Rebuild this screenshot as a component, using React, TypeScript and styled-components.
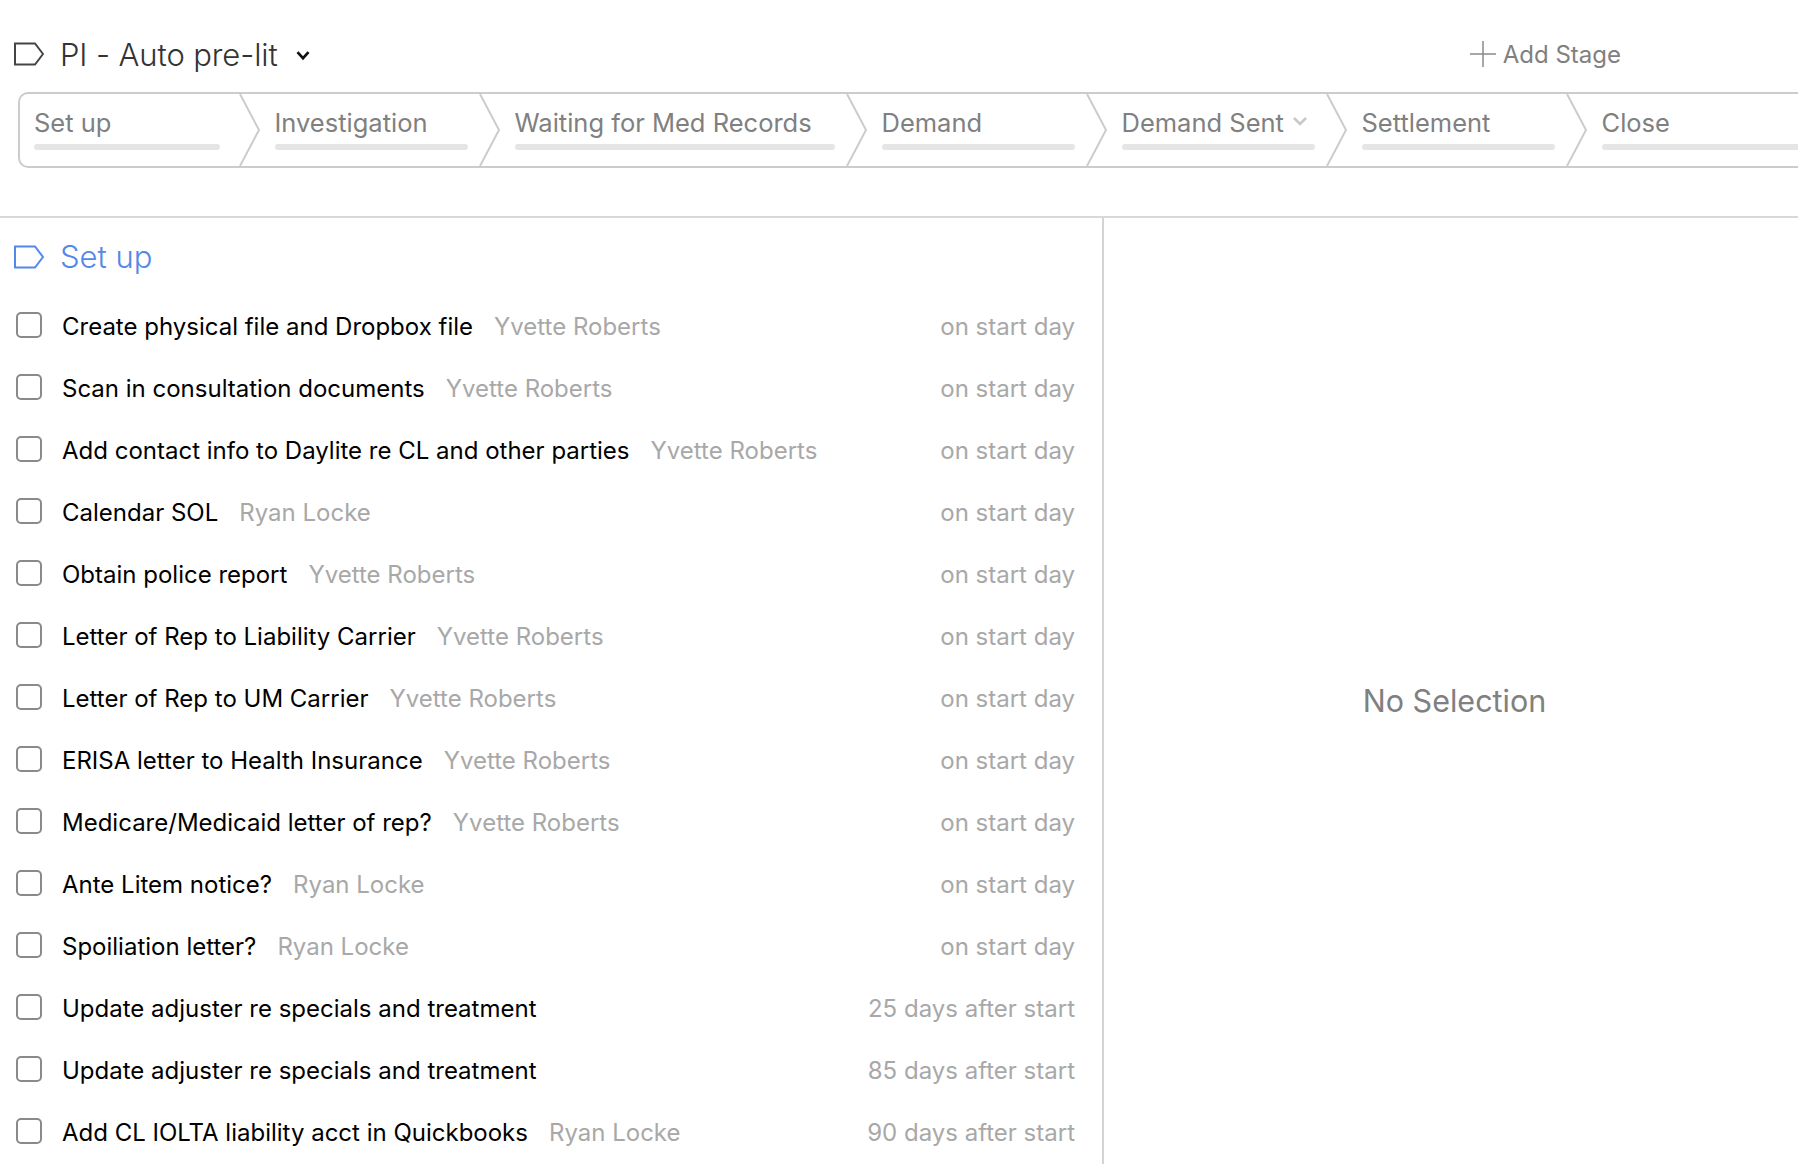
import styled, { createGlobalStyle } from "styled-components";

const stages = [
	{ name: "Set up", width: 220, first: true },
	{ name: "Investigation", width: 240 },
	{ name: "Waiting for Med Records", width: 367 },
	{ name: "Demand", width: 240 },
	{ name: "Demand Sent", width: 240, menu: true },
	{ name: "Settlement", width: 240 },
	{ name: "Close", width: 300, last: true },
];

const tasks = [
	{ title: "Create physical file and Dropbox file", who: "Yvette Roberts", when: "on start day" },
	{ title: "Scan in consultation documents", who: "Yvette Roberts", when: "on start day" },
	{ title: "Add contact info to Daylite re CL and other parties", who: "Yvette Roberts", when: "on start day" },
	{ title: "Calendar SOL", who: "Ryan Locke", when: "on start day" },
	{ title: "Obtain police report", who: "Yvette Roberts", when: "on start day" },
	{ title: "Letter of Rep to Liability Carrier", who: "Yvette Roberts", when: "on start day" },
	{ title: "Letter of Rep to UM Carrier", who: "Yvette Roberts", when: "on start day" },
	{ title: "ERISA letter to Health Insurance", who: "Yvette Roberts", when: "on start day" },
	{ title: "Medicare/Medicaid letter of rep?", who: "Yvette Roberts", when: "on start day" },
	{ title: "Ante Litem notice?", who: "Ryan Locke", when: "on start day" },
	{ title: "Spoiliation letter?", who: "Ryan Locke", when: "on start day" },
	{ title: "Update adjuster re specials and treatment", when: "25 days after start" },
	{ title: "Update adjuster re specials and treatment", when: "85 days after start" },
	{ title: "Add CL IOLTA liability acct in Quickbooks", who: "Ryan Locke", when: "90 days after start" },
];

function TagIcon({ color }: { color: string }) {
	return (
		<TagSvg viewBox="0 0 30 24">
			<path d="M1 1.5H21L29 12L21 22.5H1Z" fill="none" stroke={color} strokeWidth="2" />
		</TagSvg>
	);
}

function App() {
	return (
		<Page>
			<GlobalStyle />
			<Header>
				<TitleGroup>
					<TagIcon color="#444444" />
					<Title>PI - Auto pre-lit</Title>
					<TitleCaret viewBox="0 0 14 10">
						<path d="M2 2L7 7.5L12 2" fill="none" stroke="#111" strokeWidth="2.4" />
					</TitleCaret>
				</TitleGroup>
				<AddStage>
					<PlusSvg viewBox="0 0 26 26">
						<path d="M13 0V26M0 13H26" stroke="#8a8a8a" strokeWidth="1.5" />
					</PlusSvg>
					Add Stage
				</AddStage>
			</Header>
			<Strip>
				{stages.map((s) => (
					<Stage key={s.name} $width={s.width} $first={s.first}>
						<StageLabel>
							{s.name}
							{s.menu && (
								<MenuCaret viewBox="0 0 16 10">
									<path d="M2 2L8 8L14 2" fill="none" stroke="#c8c8c8" strokeWidth="2.6" />
								</MenuCaret>
							)}
						</StageLabel>
						<StageBar />
						{!s.last && (
							<Chevron viewBox="0 0 21 74" preserveAspectRatio="none">
								<path d="M1 0L20 37L1 74" fill="none" stroke="#cccccc" strokeWidth="2" />
							</Chevron>
						)}
					</Stage>
				))}
			</Strip>
			<Body>
				<ListPane>
					<SectionHead>
						<TagIcon color="#5288ea" />
						<SectionTitle>Set up</SectionTitle>
					</SectionHead>
					{tasks.map((t, i) => (
						<Row key={i}>
							<Check />
							<TaskTitle>{t.title}</TaskTitle>
							{t.who && <Who>{t.who}</Who>}
							<When>{t.when}</When>
						</Row>
					))}
				</ListPane>
				<DetailPane>No Selection</DetailPane>
			</Body>
		</Page>
	);
}
export default App;

const GlobalStyle = createGlobalStyle`
	html, body {
		margin: 0;
		padding: 0;
		background: #fff;
		overflow: hidden;
	}
	* {
		box-sizing: border-box;
	}
`;
const Page = styled.div`
	width: 1798px;
	height: 1164px;
	overflow: hidden;
	background: #fff;
	font-family: Inter, "Liberation Sans", sans-serif;
	display: flex;
	flex-direction: column;
`;
const Header = styled.div`
	height: 92px;
	flex: none;
	padding: 16px 177px 0 14px;
	display: flex;
	align-items: center;
	justify-content: space-between;
`;
const TitleGroup = styled.div`
	display: flex;
	align-items: center;
`;
const TagSvg = styled.svg`
	width: 30px;
	height: 24px;
	flex: none;
`;
const Title = styled.span`
	margin-left: 16px;
	font-size: 31px;
	font-weight: 300;
	letter-spacing: -0.1px;
	color: #333333;
`;
const TitleCaret = styled.svg`
	width: 16px;
	height: 11px;
	margin: 2px 0 0 17px;
`;
const AddStage = styled.div`
	display: flex;
	align-items: center;
	gap: 7px;
	font-size: 24px;
	color: #808080;
`;
const PlusSvg = styled.svg`
	width: 26px;
	height: 26px;
`;
const Strip = styled.div`
	margin-left: 18px;
	height: 76px;
	width: 1800px;
	flex: none;
	display: flex;
	border: 2px solid #cccccc;
	border-right: none;
	border-radius: 10px 0 0 10px;
`;
const Stage = styled.div<{ $width: number; $first?: boolean }>`
	position: relative;
	flex: none;
	width: ${(p) => p.$width}px;
	padding: 11px ${(p) => (p.$first ? 20 : 12)}px 0 ${(p) => (p.$first ? 14 : 34.5)}px;
`;
const StageLabel = styled.div`
	height: 34px;
	display: flex;
	align-items: center;
	justify-content: space-between;
	font-size: 25.5px;
	color: #808080;
	white-space: nowrap;
`;
const MenuCaret = styled.svg`
	width: 16px;
	height: 10px;
	margin: 0 7px 3px 0;
`;
const StageBar = styled.div`
	height: 6px;
	margin-top: 5px;
	border-radius: 3px;
	background: #e5e5e5;
`;
const Chevron = styled.svg`
	position: absolute;
	top: 0;
	right: -20px;
	width: 21px;
	height: 72px;
`;
const Body = styled.div`
	flex: 1;
	margin-top: 48px;
	border-top: 2px solid #d8d8d8;
	display: flex;
	min-height: 0;
`;
const ListPane = styled.div`
	width: 1104px;
	flex: none;
	border-right: 2px solid #d4d4d4;
	padding: 0 27px 0 16px;
`;
const SectionHead = styled.div`
	height: 77px;
	margin-left: -2px;
	display: flex;
	align-items: center;
`;
const SectionTitle = styled.span`
	margin-left: 16px;
	font-size: 31px;
	font-weight: 300;
	color: #5288ea;
`;
const Row = styled.div`
	height: 62px;
	display: flex;
	align-items: center;
`;
const Check = styled.span`
	width: 26px;
	height: 26px;
	flex: none;
	border: 2px solid #8a8a8a;
	border-radius: 5px;
	margin: -3px 20px 0 0;
`;
const TaskTitle = styled.span`
	font-size: 24px;
	color: #000;
	white-space: nowrap;
`;
const Who = styled.span`
	margin-left: 21px;
	font-size: 24px;
	color: #a8a8a8;
	white-space: nowrap;
`;
const When = styled.span`
	margin-left: auto;
	font-size: 24px;
	color: #a8a8a8;
	white-space: nowrap;
`;
const DetailPane = styled.div`
	flex: 1;
	display: flex;
	align-items: center;
	justify-content: center;
	padding: 18px 0 0 7px;
	font-size: 30.5px;
	color: #808080;
`;
